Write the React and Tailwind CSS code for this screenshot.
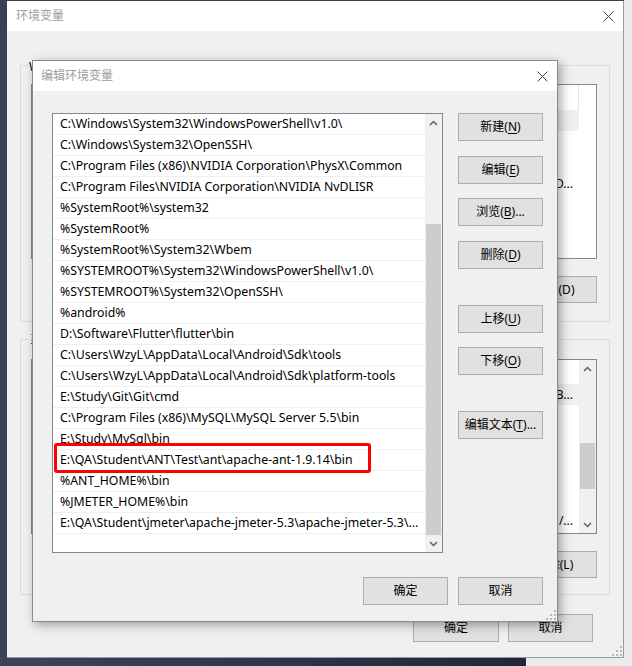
import React from 'react';

const FONT = { fontFamily: '"Noto Sans", "Noto Sans CJK SC", sans-serif' };

const paths = [
  'C:\\Windows\\System32\\WindowsPowerShell\\v1.0\\',
  'C:\\Windows\\System32\\OpenSSH\\',
  'C:\\Program Files (x86)\\NVIDIA Corporation\\PhysX\\Common',
  'C:\\Program Files\\NVIDIA Corporation\\NVIDIA NvDLISR',
  '%SystemRoot%\\system32',
  '%SystemRoot%',
  '%SystemRoot%\\System32\\Wbem',
  '%SYSTEMROOT%\\System32\\WindowsPowerShell\\v1.0\\',
  '%SYSTEMROOT%\\System32\\OpenSSH\\',
  '%android%',
  'D:\\Software\\Flutter\\flutter\\bin',
  'C:\\Users\\WzyL\\AppData\\Local\\Android\\Sdk\\tools',
  'C:\\Users\\WzyL\\AppData\\Local\\Android\\Sdk\\platform-tools',
  'E:\\Study\\Git\\Git\\cmd',
  'C:\\Program Files (x86)\\MySQL\\MySQL Server 5.5\\bin',
  'E:\\Study\\MySql\\bin',
  'E:\\QA\\Student\\ANT\\Test\\ant\\apache-ant-1.9.14\\bin',
  '%ANT_HOME%\\bin',
  '%JMETER_HOME%\\bin',
  'E:\\QA\\Student\\jmeter\\apache-jmeter-5.3\\apache-jmeter-5.3\\...',
];

function CloseX({ className = '' }) {
  return (
    <svg width="11" height="11" viewBox="0 0 11 11" className={className}>
      <path d="M0.5 0.5 L10.5 10.5 M10.5 0.5 L0.5 10.5" stroke="#444" strokeWidth="1" />
    </svg>
  );
}

function Chevron({ up }) {
  return (
    <svg width="9" height="6" viewBox="0 0 9 6">
      <path
        d={up ? 'M1 5 L4.5 1.5 L8 5' : 'M1 1 L4.5 4.5 L8 1'}
        fill="none"
        stroke="#606060"
        strokeWidth="1.5"
      />
    </svg>
  );
}

function Grip({ className = '' }) {
  const dots = [[8, 0], [4, 4], [8, 4], [0, 8], [4, 8], [8, 8]];
  return (
    <svg width="10" height="10" viewBox="0 0 10 10" className={className}>
      {dots.map(([x, y]) => (
        <rect key={`${x}-${y}`} x={x} y={y} width="2" height="2" fill="#b8b8b8" />
      ))}
    </svg>
  );
}

function WinButton({ label, hotkey, suffix = '', className = '' }) {
  return (
    <button
      type="button"
      className={`w-[85px] h-[28px] bg-[#e1e1e1] border border-[#adadad] text-[12px] text-black flex items-center justify-center leading-none ${className}`}
    >
      <span>
        {label}
        {hotkey && (
          <>
            (<u className="underline-offset-2">{hotkey}</u>)
          </>
        )}
        {suffix}
      </span>
    </button>
  );
}

// The window behind: almost all of it is covered by the edit dialog,
// so only the right-hand slivers carry content.
function BackWindow() {
  return (
    <div className="absolute left-[7px] top-[1px] w-[617px] h-[657px] bg-[#f0f0f0] border-r border-b border-[#9a9a9a] flex flex-col">
      <div className="h-[30px] bg-white flex items-center justify-between pl-[9px] pr-[9px] shrink-0">
        <span className="text-[12px] text-[#9d9d9d]">环境变量</span>
        <CloseX />
      </div>
      <div className="flex-1 flex flex-col px-[13px] pt-[34px]">
        {/* user variables */}
        <div className="relative h-[257px] border border-[#dcdcdc] flex flex-col items-end pr-[12px] pt-[18px]">
          <span className="absolute left-[7px] -top-[5px] bg-[#f0f0f0] px-[1px] text-[12px] leading-none">
            WzyL 的用户变量(U)
          </span>
          <div className="w-[566px] h-[175px] bg-white border border-[#828790] flex flex-col">
            <div className="h-[25px] flex">
              <div className="flex-1 border-r border-[#e5e5e5]" />
              <div className="w-[17px]" />
            </div>
            <div className="flex">
              <div className="flex-1 flex flex-col">
                <div className="h-[21px] bg-[#f0f0f0]" />
                <div className="h-[21px]" />
                <div className="h-[21px]" />
                <div className="h-[21px] flex items-center justify-end pr-[6px] text-[12px]">
                  D...
                </div>
              </div>
              <div className="w-[17px]" />
            </div>
          </div>
          <button
            type="button"
            className="mt-[17px] w-[85px] h-[27px] bg-[#e1e1e1] border border-[#adadad] text-[12px] flex items-center justify-center"
          >
            删除(D)
          </button>
        </div>
        {/* system variables */}
        <div className="relative mt-[17px] h-[256px] border border-[#dcdcdc] flex flex-col items-end pr-[12px] pt-[19px]">
          <span className="absolute left-[8px] -top-[6px] bg-[#f0f0f0] px-[1px] text-[12px] leading-none">
            系统变量(S)
          </span>
          <div className="w-[566px] h-[175px] bg-white border border-[#828790] flex">
            <div className="flex-1 flex flex-col pt-[24px]">
              <div className="h-[21px] bg-[#f0f0f0] flex items-center justify-end pr-[6px] text-[12px]">
                B...
              </div>
              <div className="h-[21px]" />
              <div className="h-[21px]" />
              <div className="h-[21px]" />
              <div className="h-[21px]" />
              <div className="h-[21px]" />
              <div className="h-[21px] flex items-center justify-end pr-[6px] text-[12px]">
                /...
              </div>
            </div>
            <div className="w-[17px] bg-[#f0f0f0] flex flex-col items-center">
              <div className="h-[17px] flex items-center justify-center">
                <Chevron up />
              </div>
              <div className="flex-1 w-[15px] relative">
                <div className="absolute left-0 right-0 top-[66px] h-[46px] bg-[#cdcdcd]" />
              </div>
              <div className="h-[17px] flex items-center justify-center">
                <Chevron />
              </div>
            </div>
          </div>
          <button
            type="button"
            className="mt-[17px] w-[85px] h-[27px] bg-[#e1e1e1] border border-[#adadad] text-[12px] flex items-center justify-center"
          >
            删除(L)
          </button>
        </div>
        <div className="flex justify-end gap-[9px] mt-[19px] pr-[17px]">
          <button type="button" className="w-[86px] h-[28px] bg-[#e1e1e1] border border-[#adadad] text-[12px]">
            确定
          </button>
          <button type="button" className="w-[85px] h-[28px] bg-[#e1e1e1] border border-[#adadad] text-[12px]">
            取消
          </button>
        </div>
      </div>
      <Grip className="absolute right-[1px] bottom-[1px]" />
    </div>
  );
}

function PathList() {
  return (
    <div className="relative w-[391px] h-[440px] bg-white border border-[#828790] flex shrink-0">
      <div className="flex-1 flex flex-col overflow-hidden">
        {paths.map((p) => (
          <div
            key={p}
            className="h-[21px] border-b border-[#f0f0f0] pl-[7px] flex items-center text-[12.3px] text-black whitespace-nowrap overflow-hidden"
          >
            {p}
          </div>
        ))}
      </div>
      <div className="w-[17px] bg-[#f0f0f0] flex flex-col items-center">
        <div className="h-[17px] flex items-center justify-center">
          <Chevron up />
        </div>
        <div className="flex-1 w-[15px] flex flex-col justify-end">
          <div className="h-[311px] bg-[#cdcdcd]" />
        </div>
        <div className="h-[17px] flex items-center justify-center">
          <Chevron />
        </div>
      </div>
      {/* annotation drawn over the list */}
      <div className="absolute left-[1px] top-[329px] w-[317px] h-[30px] border-[3px] border-[#ff0000] rounded-[3px]" />
    </div>
  );
}

function EditDialog() {
  return (
    <div className="absolute left-[32px] top-[60px] w-[526px] h-[562px] bg-[#f0f0f0] border border-[#8a8a8a] shadow-[3px_3px_10px_rgba(0,0,0,0.35)] flex flex-col">
      <div className="h-[30px] bg-white flex items-center justify-between pl-[8px] pr-[9px] shrink-0">
        <span className="text-[12px] text-[#9d9d9d]">编辑环境变量</span>
        <CloseX />
      </div>
      <div className="flex-1 flex flex-col pl-[19px] pr-[14px] pt-[22px] pb-[16px]">
        <div className="flex gap-[15px]">
          <PathList />
          <div className="flex flex-col">
            <WinButton label="新建" hotkey="N" />
            <WinButton label="编辑" hotkey="E" className="mt-[15px]" />
            <WinButton label="浏览" hotkey="B" suffix="..." className="mt-[14px]" />
            <WinButton label="删除" hotkey="D" className="mt-[15px]" />
            <WinButton label="上移" hotkey="U" className="mt-[36px]" />
            <WinButton label="下移" hotkey="O" className="mt-[14px]" />
            <WinButton label="编辑文本" hotkey="T" suffix="..." className="mt-[36px]" />
          </div>
        </div>
        <div className="mt-auto flex justify-end gap-[10px]">
          <WinButton label="确定" />
          <WinButton label="取消" />
        </div>
      </div>
      <Grip className="absolute right-[1px] bottom-[1px]" />
    </div>
  );
}

export default function App() {
  return (
    <div
      className="relative w-[632px] h-[666px] overflow-hidden bg-[#3b4058]"
      style={FONT}
    >
      <div className="absolute left-0 right-0 bottom-0 h-[9px] bg-linear-to-r from-[#3d435b] to-[#1c2234]" />
      <div className="absolute right-0 top-0 w-[8px] h-full bg-[#ebebeb]" />
      <div className="absolute left-[526px] bottom-0 w-[106px] h-[9px] bg-[#ebebeb]" />
      <BackWindow />
      <EditDialog />
    </div>
  );
}
